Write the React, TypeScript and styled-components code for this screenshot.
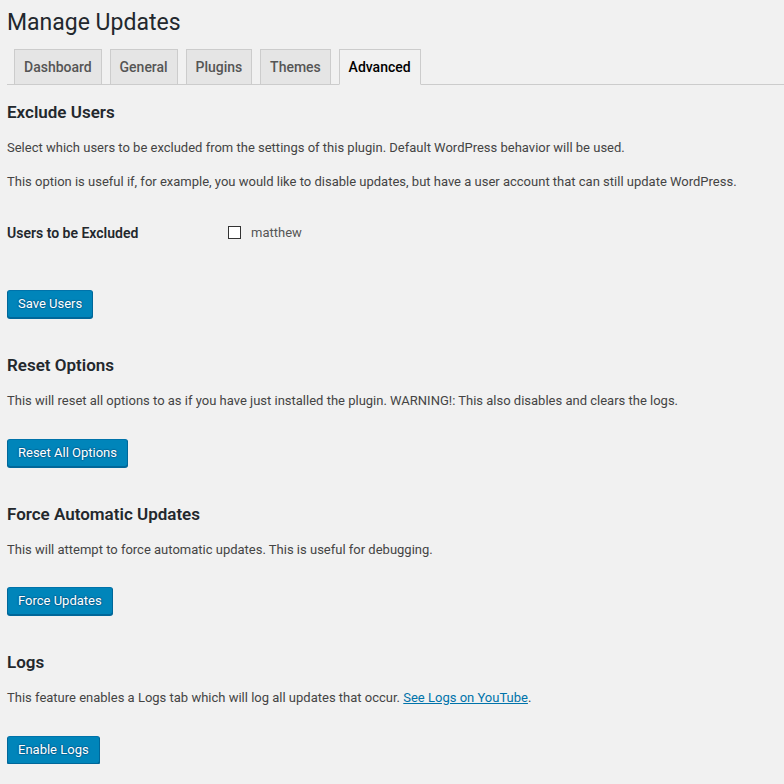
import React from "react";
import styled, { createGlobalStyle } from "styled-components";

const GlobalStyle = createGlobalStyle`
  html, body {
    margin: 0;
    padding: 0;
    background: #f1f1f1;
    font-family: Roboto, "Liberation Sans", sans-serif;
    color: #444;
  }
`;

const Wrap = styled.div`
  padding-left: 7px;
  overflow: hidden;
`;

const Title = styled.h1`
  margin: 0;
  padding-top: 8px;
  font-size: 23px;
  line-height: 29px;
  font-weight: 400;
  color: #23282d;
`;

const TabBar = styled.nav`
  display: flex;
  gap: 7.8px;
  margin-top: 12px;
  padding-left: 7px;
  border-bottom: 1px solid #ccc;
`;

const Tab = styled.a<{ $active?: boolean }>`
  display: block;
  margin-bottom: -1px;
  padding: 5px 9px;
  font-size: 14px;
  line-height: 24px;
  font-weight: 500;
  text-decoration: none;
  border: 1px solid #ccc;
  background: ${(p) => (p.$active ? "#f1f1f1" : "#e5e5e5")};
  border-bottom-color: ${(p) => (p.$active ? "#f1f1f1" : "#ccc")};
  color: ${(p) => (p.$active ? "#000" : "#555")};
`;

const Heading = styled.h2<{ $top: number }>`
  margin: ${(p) => p.$top}px 0 0;
  font-size: 17px;
  line-height: 23px;
  font-weight: 600;
  color: #23282d;
`;

const Text = styled.p<{ $top?: number }>`
  margin: ${(p) => p.$top ?? 14}px 0 0;
  font-size: 13px;
  line-height: 20px;
  color: #444;
`;

const Link = styled.a`
  color: #0073aa;
  text-decoration: underline;
`;

const FieldRow = styled.div`
  display: grid;
  grid-template-columns: 221px 1fr;
  align-items: center;
  height: 50px;
  margin-top: 15.5px;
`;

const FieldLabel = styled.div`
  font-size: 14px;
  font-weight: 600;
  color: #23282d;
`;

const CheckLabel = styled.label`
  display: flex;
  align-items: center;
  gap: 10px;
  font-size: 13px;
  color: #555;
`;

const Checkbox = styled.input`
  appearance: none;
  margin: 0;
  width: 13px;
  height: 13px;
  border: 1px solid #333;
  background: #fff;
  box-sizing: border-box;
`;

const Button = styled.button<{ $top: number }>`
  display: block;
  margin-top: ${(p) => p.$top}px;
  height: 28px;
  padding: 0 10px 1px;
  font-family: inherit;
  font-size: 13px;
  line-height: 26px;
  color: #fff;
  background: #0085ba;
  border: 1px solid;
  border-color: #0073aa #006799 #006799;
  border-radius: 3px;
  box-shadow: 0 1px 0 #006799;
  text-shadow: 0 -1px 1px #006799, 1px 0 1px #006799, 0 1px 1px #006799,
    -1px 0 1px #006799;
  cursor: pointer;
`;

const tabs = ["Dashboard", "General", "Plugins", "Themes", "Advanced"];

export default function App() {
  return (
    <>
      <GlobalStyle />
      <Wrap>
        <Title>Manage Updates</Title>
        <TabBar>
          {tabs.map((t) => (
            <Tab key={t} href="#" $active={t === "Advanced"}>
              {t}
            </Tab>
          ))}
        </TabBar>

        <Heading $top={16}>Exclude Users</Heading>
        <Text>
          Select which users to be excluded from the settings of this plugin.
          Default WordPress behavior will be used.
        </Text>
        <Text $top={14}>
          This option is useful if, for example, you would like to disable
          updates, but have a user account that can still update WordPress.
        </Text>
        <FieldRow>
          <FieldLabel>Users to be Excluded</FieldLabel>
          <CheckLabel>
            <Checkbox type="checkbox" />
            matthew
          </CheckLabel>
        </FieldRow>
        <Button $top={32}>Save Users</Button>

        <Heading $top={36.5}>Reset Options</Heading>
        <Text>
          This will reset all options to as if you have just installed the
          plugin. WARNING!: This also disables and clears the logs.
        </Text>
        <Button $top={27.5}>Reset All Options</Button>

        <Heading $top={36}>Force Automatic Updates</Heading>
        <Text>
          This will attempt to force automatic updates. This is useful for
          debugging.
        </Text>
        <Button $top={27.5}>Force Updates</Button>

        <Heading $top={36}>Logs</Heading>
        <Text>
          This feature enables a Logs tab which will log all updates that
          occur. <Link href="#">See Logs on YouTube</Link>.
        </Text>
        <Button $top={27.5}>Enable Logs</Button>
      </Wrap>
    </>
  );
}
